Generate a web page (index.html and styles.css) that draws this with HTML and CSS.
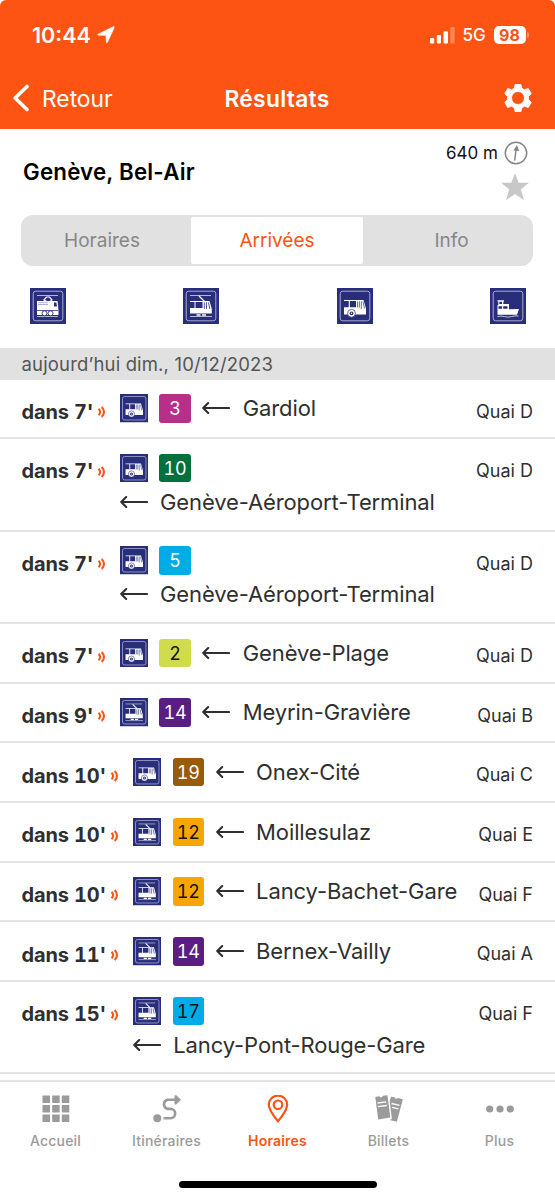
FILE: index.html
```html
<!DOCTYPE html>
<html lang="fr">
<head>
<meta charset="utf-8">
<title>Résultats</title>
<link rel="stylesheet" href="styles.css">
</head>
<body>
<svg class="defs" width="0" height="0">
  <symbol id="frame" viewBox="0 0 36 36">
    <rect width="36" height="36" fill="#292e7b"/>
    <rect x="3.2" y="3.2" width="29.6" height="29.6" rx="2.5" fill="none" stroke="#a9acd3" stroke-width="1"/>
  </symbol>
  <symbol id="train" viewBox="0 0 36 36">
    <use href="#frame"/>
    <path d="M7 7.500H28M7 28.500H28" stroke="#c3c5e0" stroke-width=".9"/>
    <path d="M14 12L16.500 9H19.500L22 12L20 13.500H16.500Z" fill="none" stroke="#fff" stroke-width="1.200"/>
    <path d="M7 13H27.500L28.500 22V27H7Z" fill="#fff"/>
    <path d="M8 14.700H18M8 16.500H18" stroke="#7c80b3" stroke-width=".6"/>
    <path d="M24 14.500H26.300L27 18.500H24ZM7 22.300H28.500V23H7Z" fill="#292e7b"/>
    <g fill="#fff" stroke="#292e7b" stroke-width=".9"><circle cx="14.500" cy="25.300" r="2.500"/><circle cx="20.500" cy="25.300" r="2.500"/></g>
  </symbol>
  <symbol id="tram" viewBox="0 0 36 36">
    <use href="#frame"/>
    <path d="M7 7.500H28M7 28.500H29" stroke="#c3c5e0" stroke-width=".9"/>
    <path d="M16 8L21.500 13.500" stroke="#fff" stroke-width="1.300"/>
    <path d="M7 13H26.500L28.800 21V25.500H7V20H19.500V14H7Z" fill="#fff"/>
    <path d="M12 13.500V20.500" stroke="#fff" stroke-width="1"/>
    <path d="M21.300 14.300V21M23.500 14.300V21M25.500 14.500L26.800 21" stroke="#292e7b" stroke-width=".8"/>
    <path d="M13.500 27H17.500M19 27H23" stroke="#fff" stroke-width="1.500"/>
  </symbol>
  <symbol id="bus" viewBox="0 0 36 36">
    <use href="#frame"/>
    <path d="M7 12H26.500L29 20.500V26.500H7V19.300H19V13H7Z" fill="#fff"/>
    <path d="M12.300 12.500V20" stroke="#fff" stroke-width="1.100"/>
    <path d="M20.600 13.300V19.500M22.400 13.300V19.500M24.300 13.300V21M26 13.500L27.500 20.500" stroke="#292e7b" stroke-width=".7"/>
    <circle cx="14.500" cy="25.300" r="3.900" fill="#fff" stroke="#292e7b" stroke-width=".7"/>
    <circle cx="14.500" cy="25.300" r="1.900" fill="#292e7b"/><circle cx="14.500" cy="25.300" r=".7" fill="#fff"/>
  </symbol>
  <symbol id="boat" viewBox="0 0 36 36">
    <use href="#frame"/>
    <path d="M7.500 12.300H14V13.500H13.300V16H19V21.300L29 21L27 26.800H7.500V17H8.300V13.500H7.500Z" fill="#fff"/>
    <path d="M9.300 13.800H12V16H9.300ZM8.500 18.200H12V20.800H8.500ZM13.200 18.200H17.500V20.800H13.200Z" fill="#292e7b"/>
    <path d="M7.500 28.600Q11 27.500 14.500 28.600T21.500 28.600T28.500 28" fill="none" stroke="#d5d6ea" stroke-width=".9"/>
  </symbol>
  <symbol id="back" viewBox="0 0 28 14">
    <path d="M1.200 7H27M6.200 2.100L1.200 7L6.200 11.900" fill="none" stroke="#2f2f2f" stroke-width="2.100" stroke-linecap="round" stroke-linejoin="round"/>
  </symbol>
  <symbol id="live" viewBox="0 0 8 12">
    <path d="M.6 2.800Q3.600 6 .6 9.200M3.700 1Q8.300 6 3.700 11" fill="none" stroke="#fe5413" stroke-width="2"/>
  </symbol>
</svg>

<header class="top">
  <div class="status">
    <span class="clock">10:44</span>
    <svg class="loc" viewBox="0 0 18 18"><path d="M1 8.200L16.200.7Q17.500.3 17.200 1.700L10.500 16.300Q9.500 17.700 9.300 16L9 9.300L1.800 9.200Q.1 9 1 8.200Z" fill="#fff" stroke="#fff" stroke-width=".6"/></svg>
    <svg class="bars" viewBox="0 0 25 17"><g fill="#fff"><rect y="11" width="4.200" height="5.500" rx="1"/><rect x="6.800" y="8" width="4.200" height="8.500" rx="1"/><rect x="13.500" y="4.200" width="4.500" height="12.300" rx="1"/><rect x="20.300" width="4.300" height="16.500" rx="1" opacity=".3"/></g></svg>
    <span class="net">5G</span>
    <span class="battery">98</span><i class="cap"></i>
  </div>
  <nav class="navbar">
    <svg class="chevron" viewBox="0 0 17 28"><path d="M14.500 2.500L2.700 14L14.500 25.500" fill="none" stroke="#fff" stroke-width="3.600" stroke-linecap="round" stroke-linejoin="round"/></svg>
    <span class="retour">Retour</span>
    <h1>Résultats</h1>
    <svg class="gear" viewBox="0 0 28 28"><path fill="#fff" stroke="#fff" stroke-width=".8" stroke-linejoin="round" fill-rule="evenodd" d="M11 .5H17L17.800 4.200L20.400 5.700L24.300 4.500L27.300 9.700L24.500 12.500V15.500L27.300 18.300L24.300 23.500L20.400 22.300L17.800 23.800L17 27.500H11L10.200 23.800L7.600 22.300L3.700 23.500L.7 18.300L3.500 15.500V12.500L.7 9.700L3.700 4.500L7.600 5.700L10.200 4.200ZM14 7.500A6.500 6.500 0 1 0 14 20.500A6.500 6.500 0 1 0 14 7.500Z"/></svg>
  </nav>
</header>

<section class="stop">
  <h2>Genève, Bel-Air</h2>
  <div class="distance"><span>640 m</span>
    <svg class="compass" viewBox="0 0 24 24"><circle cx="12" cy="12" r="10.700" fill="none" stroke="#868686" stroke-width="1.500"/><path d="M10.600 19.700L12.200 8" stroke="#868686" stroke-width="1.500"/><path d="M9.300 9.500L13 4L15.200 10Z" fill="#868686"/></svg>
  </div>
  <svg class="star" viewBox="0 0 28 28"><path d="M14 0L17.700 9.800H28L19.800 16.300L22.900 27L14 21L5.100 27L8.200 16.300L0 9.800H10.300Z" fill="#c8c8c8"/></svg>
</section>

<div class="segments"><span>Horaires</span><span class="active">Arrivées</span><span>Info</span></div>

<div class="modes">
  <svg><use href="#train"/></svg><svg><use href="#tram"/></svg><svg><use href="#bus"/></svg><svg><use href="#boat"/></svg>
</div>

<div class="date">aujourd’hui dim., 10/12/2023</div>

<main>
  <div class="row"><div class="time"><b>dans 7'</b><svg><use href="#live"/></svg></div><div class="trip"><svg class="mode"><use href="#bus"/></svg><span class="line l3">3</span><svg class="arrow"><use href="#back"/></svg><span class="name">Gardiol</span></div><span class="quai">Quai D</span></div>
  <div class="row double"><div class="time"><b>dans 7'</b><svg><use href="#live"/></svg></div><div class="trip"><svg class="mode"><use href="#bus"/></svg><span class="line l10">10</span><div class="dest"><svg class="arrow"><use href="#back"/></svg><span class="name">Genève-Aéroport-Terminal</span></div></div><span class="quai">Quai D</span></div>
  <div class="row double"><div class="time"><b>dans 7'</b><svg><use href="#live"/></svg></div><div class="trip"><svg class="mode"><use href="#bus"/></svg><span class="line l5">5</span><div class="dest"><svg class="arrow"><use href="#back"/></svg><span class="name">Genève-Aéroport-Terminal</span></div></div><span class="quai">Quai D</span></div>
  <div class="row"><div class="time"><b>dans 7'</b><svg><use href="#live"/></svg></div><div class="trip"><svg class="mode"><use href="#bus"/></svg><span class="line l2">2</span><svg class="arrow"><use href="#back"/></svg><span class="name">Genève-Plage</span></div><span class="quai">Quai D</span></div>
  <div class="row"><div class="time"><b>dans 9'</b><svg><use href="#live"/></svg></div><div class="trip"><svg class="mode"><use href="#tram"/></svg><span class="line l14">14</span><svg class="arrow"><use href="#back"/></svg><span class="name">Meyrin-Gravière</span></div><span class="quai">Quai B</span></div>
  <div class="row long"><div class="time"><b>dans 10'</b><svg><use href="#live"/></svg></div><div class="trip"><svg class="mode"><use href="#bus"/></svg><span class="line l19">19</span><svg class="arrow"><use href="#back"/></svg><span class="name">Onex-Cité</span></div><span class="quai">Quai C</span></div>
  <div class="row long"><div class="time"><b>dans 10'</b><svg><use href="#live"/></svg></div><div class="trip"><svg class="mode"><use href="#tram"/></svg><span class="line l12">12</span><svg class="arrow"><use href="#back"/></svg><span class="name">Moillesulaz</span></div><span class="quai">Quai E</span></div>
  <div class="row long"><div class="time"><b>dans 10'</b><svg><use href="#live"/></svg></div><div class="trip"><svg class="mode"><use href="#tram"/></svg><span class="line l12">12</span><svg class="arrow"><use href="#back"/></svg><span class="name">Lancy-Bachet-Gare</span></div><span class="quai">Quai F</span></div>
  <div class="row long"><div class="time"><b>dans 11'</b><svg><use href="#live"/></svg></div><div class="trip"><svg class="mode"><use href="#tram"/></svg><span class="line l14">14</span><svg class="arrow"><use href="#back"/></svg><span class="name">Bernex-Vailly</span></div><span class="quai">Quai A</span></div>
  <div class="row double long"><div class="time"><b>dans 15'</b><svg><use href="#live"/></svg></div><div class="trip"><svg class="mode"><use href="#tram"/></svg><span class="line l17">17</span><div class="dest"><svg class="arrow"><use href="#back"/></svg><span class="name">Lancy-Pont-Rouge-Gare</span></div></div><span class="quai">Quai F</span></div>
</main>

<footer class="tabs">
  <div class="tab"><svg viewBox="0 0 28 28"><path d="M.5.500h7.500v7.500h-7.500zM10.200.500h7.500v7.500h-7.500zM19.800.500h7.500v7.500h-7.500zM.5 10.100h7.500v7.500h-7.500zM10.200 10.100h7.500v7.500h-7.500zM19.800 10.100h7.500v7.500h-7.500zM.5 19.600h7.500v7.500h-7.500zM10.200 19.600h7.500v7.500h-7.500zM19.800 19.600h7.500v7.500h-7.500z" fill="currentColor"/></svg><span>Accueil</span></div>
  <div class="tab"><svg viewBox="0 0 28 28"><circle cx="4.300" cy="23.300" r="4" fill="currentColor"/><path d="M10.500 23.300H17.500A4.700 4.700 0 0 0 17.500 13.900H14.500A4.700 4.700 0 0 1 14.500 4.800H23" fill="none" stroke="currentColor" stroke-width="2.600"/><path d="M21.500.2H23.200L28 4.800L23.200 9.500H21.500Z" fill="currentColor"/></svg><span>Itinéraires</span></div>
  <div class="tab on"><svg viewBox="0 0 28 28"><path d="M14 26.400C10.500 21.500 4.800 15.500 4.800 9.800A9.200 9.200 0 0 1 23.200 9.800C23.200 15.500 17.500 21.500 14 26.400Z" fill="none" stroke="currentColor" stroke-width="2.200" stroke-linejoin="round"/><circle cx="14" cy="9.800" r="4.300" fill="none" stroke="currentColor" stroke-width="2.200"/></svg><span>Horaires</span></div>
  <div class="tab"><svg viewBox="0 0 28 28"><path d="M.3 2L4.300 1.300Q6 3.700 8 .8L12.500.2L15.300 22.500L3.200 24.500ZM16 1.800L19.600 2.300Q20.500 4.900 23.200 3.100L27.800 4.200L21.900 26.800L14.700 24.900L16.900 23.900L14.700 6Z" fill="currentColor"/><path d="M2.500 8L11.300 6.800M3 11.700L11.800 10.500M16.500 8.500L24.500 10.300M17 12.300L23.500 13.800" stroke="#fff" stroke-width="1.300"/></svg><span>Billets</span></div>
  <div class="tab"><svg viewBox="0 0 28 28"><g fill="currentColor"><circle cx="3.700" cy="14" r="3.600"/><circle cx="14" cy="14" r="3.600"/><circle cx="24.300" cy="14" r="3.600"/></g></svg><span>Plus</span></div>
</footer>
<div class="home"></div>
</body>
</html>
```
FILE: styles.css
```css
* { box-sizing: border-box; }
body { margin: 0; width: 555px; height: 1200px; overflow: hidden; background: #fff; color: #2f2f2f; font-family: Inter, sans-serif; }
svg { display: block; flex: none; }
.defs { position: absolute; }
h1, h2 { margin: 0; font-weight: 600; }
.top { height: 129px; background: #fe5413; color: #fff; border-radius: 6px 6px 0 0; }
.status { height: 70px; padding: 0 26.500px 0 32px; display: flex; align-items: center; }
.clock { font-size: 21.500px; font-weight: 600; width: 60px; white-space: nowrap; }
.loc { width: 18px; height: 18px; margin-left: 5px; }
.bars { width: 25px; height: 17px; margin-left: auto; }
.net { font-size: 17px; font-weight: 500; margin-left: 8px; width: 23px; }
.battery { width: 32px; height: 18px; line-height: 18px; margin-left: 8px; border-radius: 5px; background: #fff; color: #fe5413; font-size: 16px; font-weight: 700; text-align: center; }
.cap { width: 2px; height: 6px; margin-left: 1px; border-radius: 0 2px 2px 0; background: #ff9a70; }
.navbar { height: 56px; padding: 0 23.500px 0 12px; display: grid; grid-template-columns: 30px 170px 130px 1fr 28px; align-items: center; }
.chevron { width: 18px; height: 28px; }
.retour { font-size: 22.800px; }
.navbar h1 { font-size: 22.800px; letter-spacing: .3px; white-space: nowrap; justify-self: center; }
.gear { width: 28px; height: 28px; grid-column: 5; }
.stop { height: 86px; padding: 12px 27px 0 23px; display: grid; grid-template-columns: 1fr auto; grid-template-rows: 24px 36px; justify-items: end; }
.stop h2 { grid-row: 1 / 3; justify-self: start; align-self: center; color: #000; font-size: 22.300px; letter-spacing: .2px; margin-top: 0; }
.distance { display: flex; align-items: center; gap: 6px; font-size: 17px; color: #111; }
.compass { width: 24px; height: 24px; }
.star { width: 28px; height: 28px; margin: 8px -1px 0 0; }
.segments { height: 51px; margin: 0 22px 0 21px; padding: 2px; border-radius: 12px; background: #e1e1e1; display: grid; grid-template-columns: 168px 172px 1fr; font-size: 19px; color: #868686; }
.segments span { display: flex; justify-content: center; align-items: center; }
.segments span:first-child { padding-right: 10px; }
.segments span:last-child { padding-left: 9px; }
.segments .active { background: #fff; color: #fe5413; border-radius: 2px; }
.modes { height: 82px; padding: 22px 29px 0 29.500px; display: flex; justify-content: space-between; }
.modes svg { width: 36px; height: 36px; }
.date { height: 31.500px; padding-left: 21.500px; line-height: 32px; background: #e1e1e1; color: #555; font-size: 18.500px; letter-spacing: .16px; }
.row { height: 59.700px; padding-left: 21.500px; padding-right: 22px; border-bottom: 2px solid #e4e4e4; display: flex; align-items: flex-start; }
.double { height: 92.400px; }
.time { width: 98px; flex: none; display: flex; padding-top: 19.200px; line-height: 26px; font-size: 20px; letter-spacing: -.15px; white-space: nowrap; font-variant-numeric: tabular-nums; }
.long .time { width: 111.300px; }
.time b { width: 71px; font-weight: 700; }
.long .time b { width: 84px; }
.time svg { width: 8px; height: 12px; margin: 7.500px 0 0 5px; }
.trip { display: flex; flex-wrap: wrap; align-content: flex-start; flex: 1; padding-top: 14.600px; }
.mode { width: 28.500px; height: 28.500px; }
.line { width: 31.500px; height: 28.500px; margin-left: 11.300px; border-radius: 3px; color: #fff; text-align: center; font-size: 18px; line-height: 29px; font-variant-numeric: tabular-nums; }
.l3 { background: #b82f89; }
.l10 { background: #00703c; }
.l5 { background: #00ace7; }
.l2 { background: #d0dc4b; color: #111; }
.l14 { background: #5a1e82; }
.l19 { background: #995a0a; }
.l12 { background: #f7a600; color: #111; }
.l17 { background: #00ace7; color: #111; }
.arrow { width: 28px; height: 14px; margin: 7px 0 0 11.500px; }
.name { font-size: 22px; line-height: 29.600px; letter-spacing: -.12px; margin-left: 12.500px; white-space: nowrap; }
.dest { width: 100%; display: flex; margin-top: 5.600px; }
.dest .arrow { margin-left: 0; }
.quai { padding-top: 19px; line-height: 26px; font-size: 18px; white-space: nowrap; }
.tabs { height: 88px; margin-top: 6px; padding-top: 13px; border-top: 2px solid #e4e4e4; display: grid; grid-template-columns: repeat(5, 1fr); color: #9b9b9b; font-size: 14px; font-weight: 500; letter-spacing: .2px; }
.tab { display: flex; flex-direction: column; align-items: center; }
.tab svg { width: 28px; height: 28px; }
.tab span { margin-top: 9px; line-height: 18px; }
.on { color: #fe5413; font-weight: 600; }
.home { width: 198px; height: 7px; margin: 12.800px auto 0; border-radius: 4px; background: #000; }
```
